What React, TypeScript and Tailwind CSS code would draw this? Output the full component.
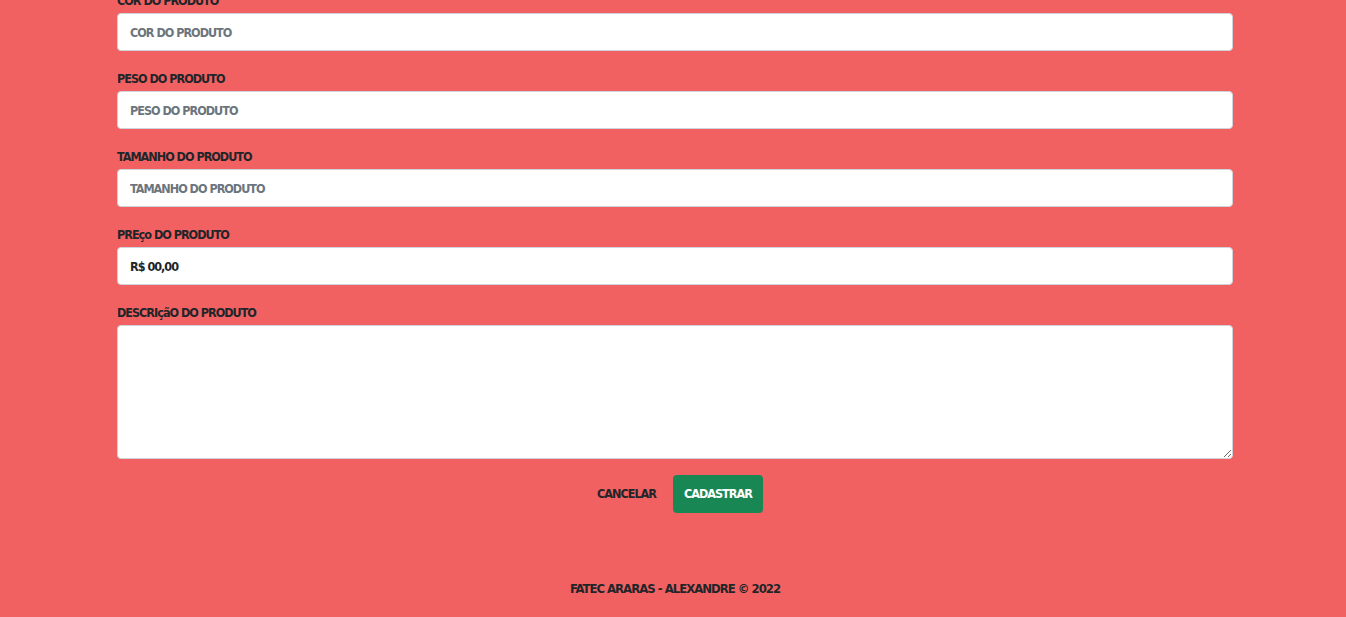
export default function App() {
  const fields = ["COR DO PRODUTO", "PESO DO PRODUTO", "TAMANHO DO PRODUTO"];
  const label = "block h-6 leading-6 text-[12.5px] font-bold tracking-[-1px]";
  const input =
    "w-full h-[38px] px-3 rounded-[4px] bg-white border border-[#ced4da] text-[12.5px] font-bold tracking-[-1px] outline-none";

  return (
    <div
      className="min-h-screen bg-[#f26161] text-[#212529] overflow-hidden"
      style={{ fontFamily: "'DejaVu Sans Condensed', 'DejaVu Sans', sans-serif" }}
    >
      <div className="w-[1116px] ml-[117px] -mt-[11px]">
        {fields.map((f) => (
          <div key={f} className="mb-4">
            <label className={label}>{f}</label>
            <input placeholder={f} className={input + " placeholder:text-[#6c757d]"} />
          </div>
        ))}
        <div className="mb-4">
          <label className={label}>PREço DO PRODUTO</label>
          <input defaultValue="R$ 00,00" className={input + " text-[#212529]"} />
        </div>
        <div className="mb-4">
          <label className={label}>DESCRIçãO DO PRODUTO</label>
          <textarea className="block w-full h-[134px] px-3 py-2 rounded-[4px] bg-white border border-[#ced4da] outline-none" />
        </div>
        <div className="flex justify-center items-center gap-[5px] pr-[2px]">
          <button className="h-[38px] px-3 text-[12.5px] font-bold tracking-[-1px] text-[#212529]">
            CANCELAR
          </button>
          <button className="h-[38px] w-[90px] rounded-[4px] bg-[#198754] text-white text-[12.5px] font-bold tracking-[-1px]">
            CADASTRAR
          </button>
        </div>
        <footer className="mt-[66px] text-center text-[13px] font-bold tracking-[-1px]">
          FATEC ARARAS - ALEXANDRE © 2022
        </footer>
      </div>
    </div>
  );
}
